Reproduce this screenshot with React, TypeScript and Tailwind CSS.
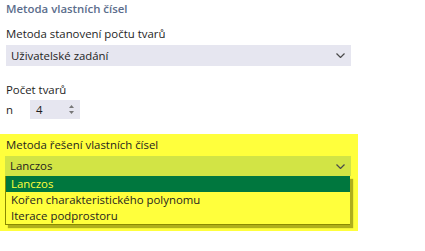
import React from 'react';

const font = { fontFamily: '"Open Sans", "Noto Sans", sans-serif' };

function Chevron() {
  return (
    <svg width="9" height="5" viewBox="0 0 9 5" className="text-[#4a4a4a]">
      <path d="M0.5 0.5 L4.5 4.5 L8.5 0.5" fill="none" stroke="currentColor" strokeWidth="1.2" />
    </svg>
  );
}

export default function App() {
  const items = ['Lanczos', 'Kořen charakteristického polynomu', 'Iterace podprostoru'];

  return (
    <div className="w-[425px] h-[251px] bg-white text-[11.4px] text-[#1e1e1e] overflow-hidden" style={font}>
      <div className="px-[6px] pt-[1px]">
        <div className="font-semibold text-[#5b6d8c] leading-[16px]">Metoda vlastních čísel</div>

        <div className="mt-[9px] leading-[16px]">Metoda stanovení počtu tvarů</div>
        <div className="mt-[3px] w-[345px] h-[21px] bg-[#e6e6f0] flex items-center justify-between pl-[5px] pr-[6px]">
          <span>Uživatelské zadání</span>
          <Chevron />
        </div>

        <div className="mt-[16px] leading-[16px]">Počet tvarů</div>
        <div className="mt-[2px] flex items-center">
          <span className="w-[24px]">n</span>
          <div className="w-[50px] h-[19px] bg-[#e6e6f0] flex items-center justify-between pl-[6px] pr-[6px]">
            <span>4</span>
            <div className="flex flex-col items-center gap-[3px]">
              <svg width="5" height="3" viewBox="0 0 5 3"><path d="M0 3 L2.5 0 L5 3 Z" fill="#777" /></svg>
              <svg width="5" height="3" viewBox="0 0 5 3"><path d="M0 0 L2.5 3 L5 0 Z" fill="#777" /></svg>
            </div>
          </div>
        </div>
      </div>

      <div className="mt-[15px] w-[358px] h-[97px] bg-[#ffff3c] pl-[5px] pt-[3px]">
        <div className="pl-[1px] leading-[16px]">Metoda řešení vlastních čísel</div>
        <div className="mt-[3px] w-[346px] h-[20px] bg-[#d2e445] flex items-center justify-between pl-[5px] pr-[6px]">
          <span>Lanczos</span>
          <Chevron />
        </div>
        <div className="w-[345px] border-l border-b border-[#8a8a00] shadow-[3px_3px_1px_rgba(110,110,0,0.55)]">
          {items.map((t, i) => (
            <div
              key={t}
              className={`h-[16px] leading-[16px] pl-[5px] ${i === 0 ? 'bg-[#00773e] text-[#ffff3c]' : ''}`}
            >
              {t}
            </div>
          ))}
        </div>
      </div>
    </div>
  );
}
